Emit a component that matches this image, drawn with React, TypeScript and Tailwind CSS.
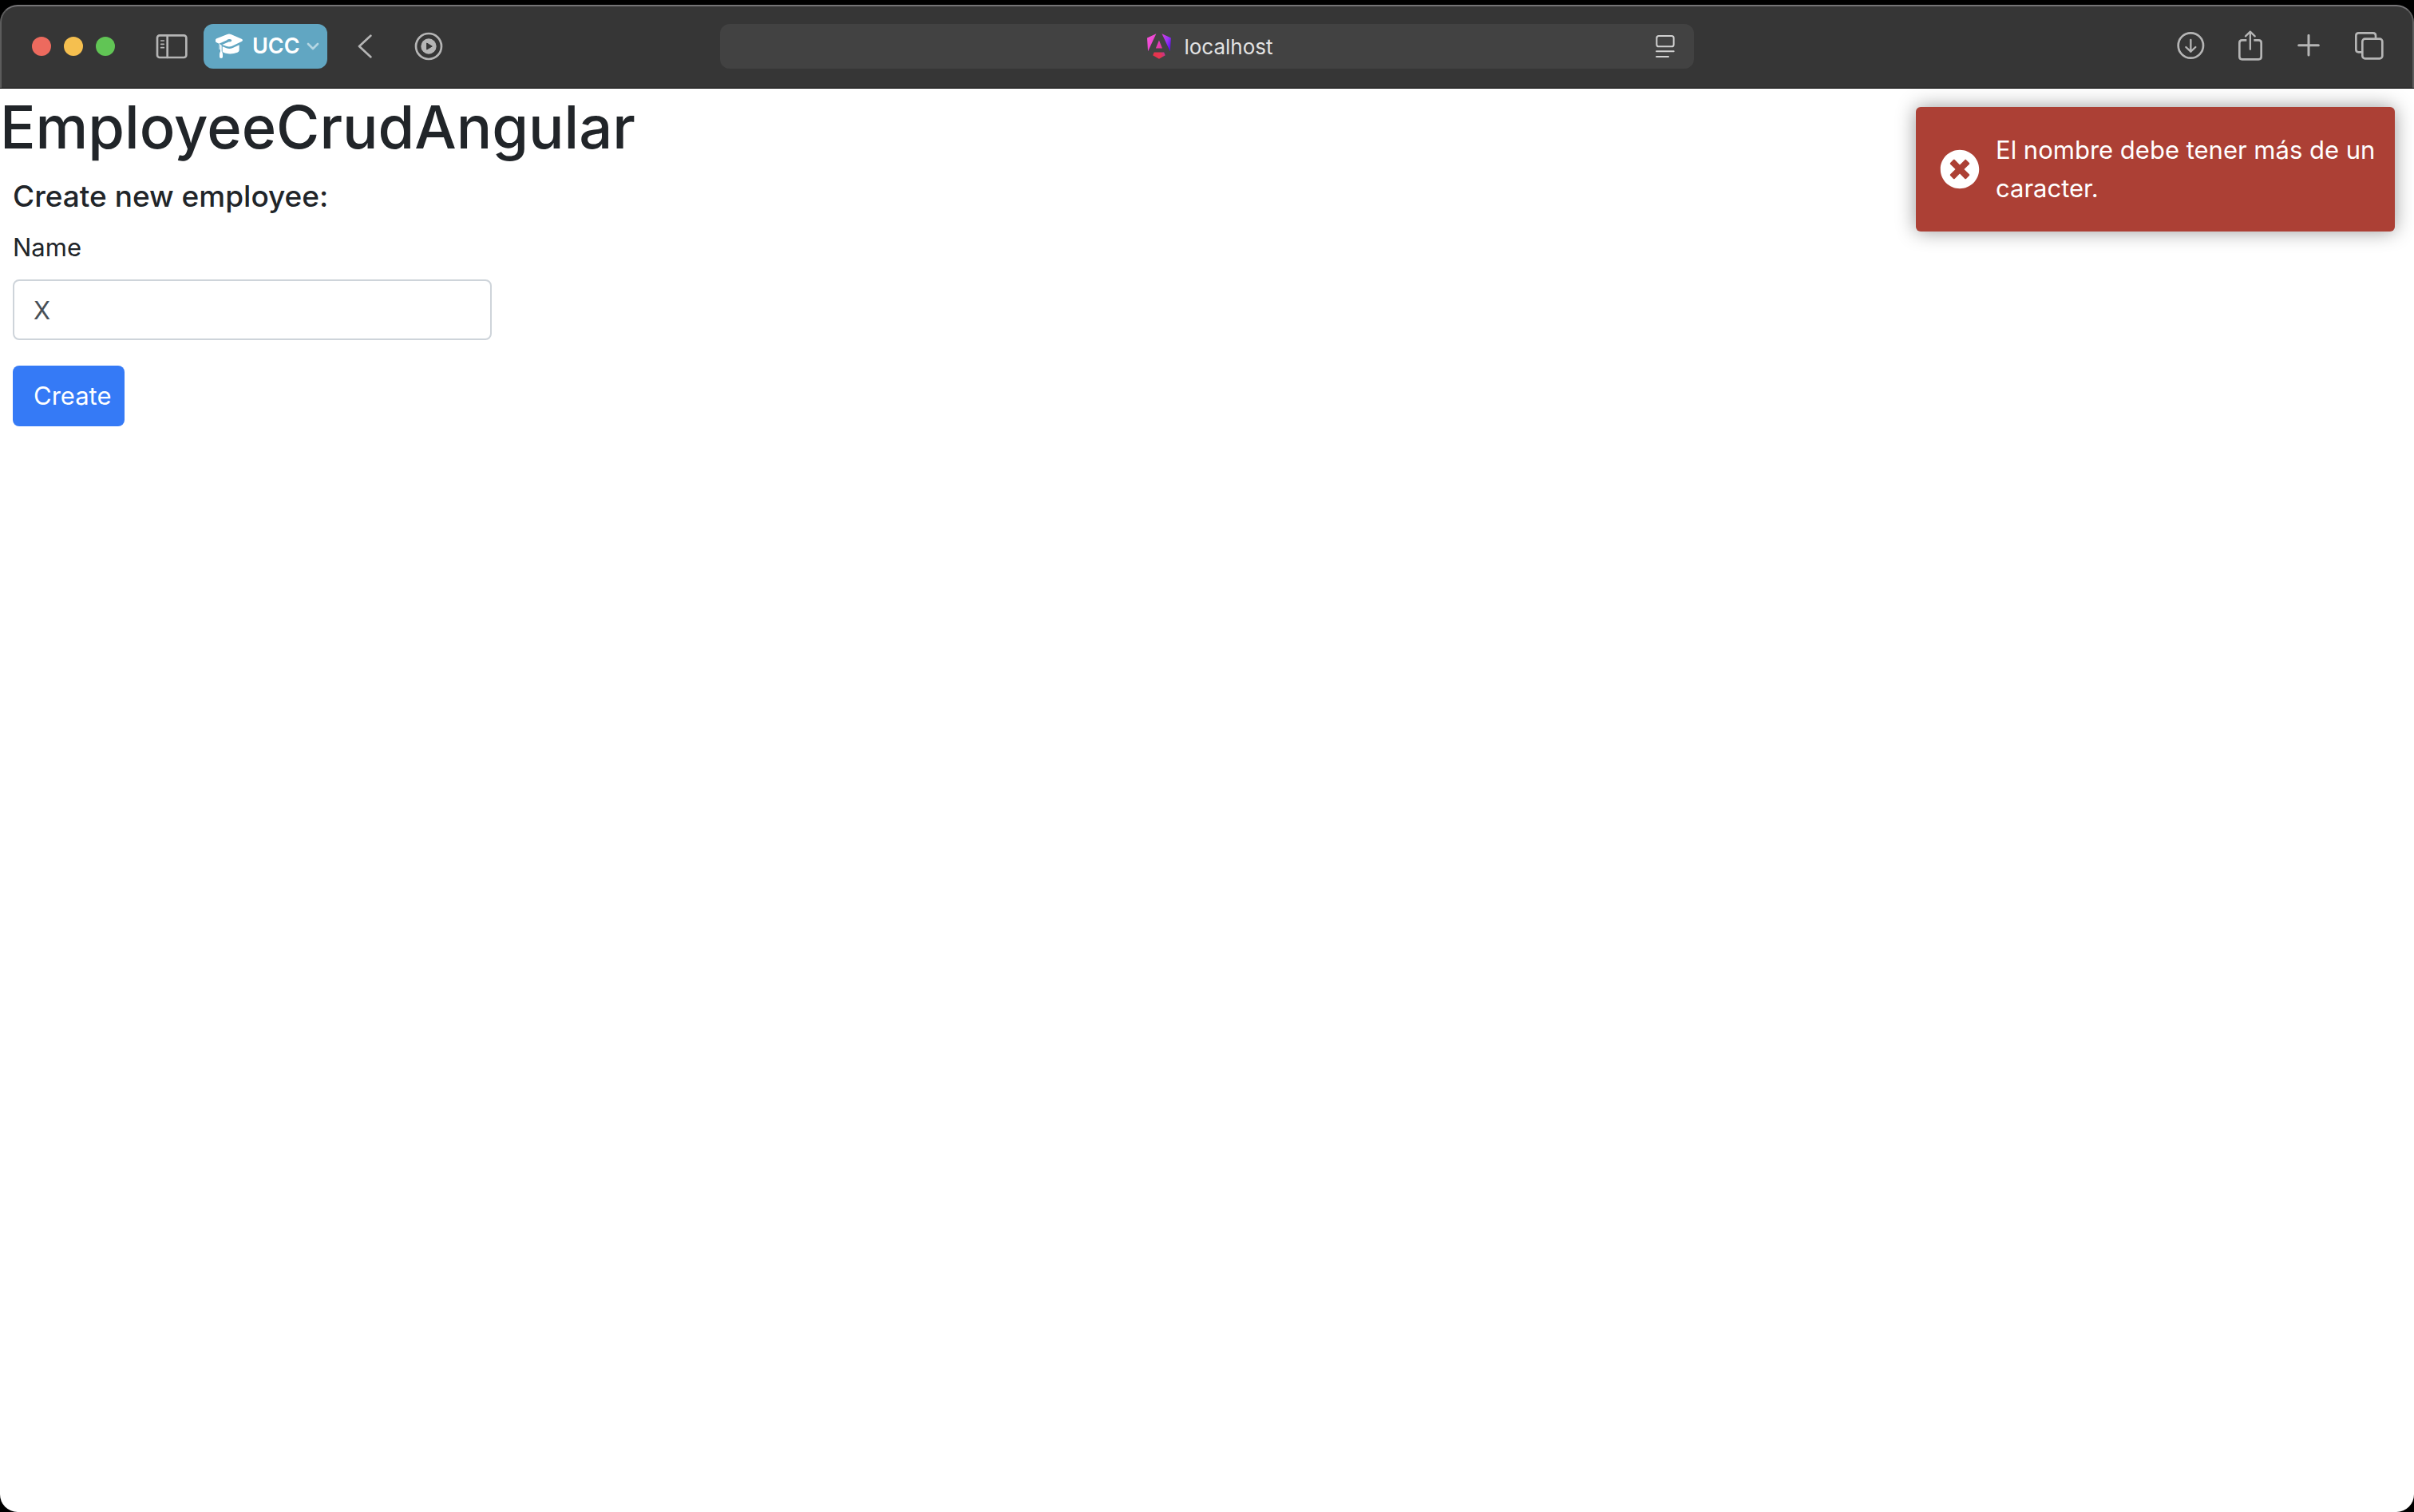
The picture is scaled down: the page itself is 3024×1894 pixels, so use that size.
import { useState, type ReactNode } from "react";
import { FaTimesCircle } from "react-icons/fa";

type IconButtonProps = {
  label: string;
  children: ReactNode;
  className?: string;
};

function IconButton({ label, children, className = "" }: IconButtonProps) {
  return (
    <button type="button" aria-label={label} className={`shrink-0 ${className}`}>
      {children}
    </button>
  );
}

const stroke = {
  fill: "none",
  stroke: "currentColor",
  strokeLinecap: "round" as const,
  strokeLinejoin: "round" as const,
};

function SidebarIcon() {
  return (
    <svg width="40" height="32" viewBox="586 122 120 96" {...stroke} strokeWidth="8">
      <rect x="592" y="129" width="109" height="83" rx="9" />
      <path d="M630 129v83" />
      <path d="M606 149h11M606 162h11M606 175h11" strokeWidth="5" />
    </svg>
  );
}

function GraduationIcon() {
  return (
    <svg width="36" height="34" viewBox="87 128 108 102" fill="currentColor">
      <path d="M90 155q0-3 4-5l40-16q7-3 14 0l40 17q4 2 4 5t-4 5l-36 17q-10 4-20 1l-17-6 26-11q9 1 10-5-1-6-9-5-7 0-9 4l-30 13-9-4q-4-2-4-5Z" />
      <path d="M116 180l15 6q12 4 24-1l24-11v20q0 5-7 8-17 7-35 5-13-1-21-7Z" />
      <path d="M105 171l8 4v23q4 4 4 12v9q0 5-6 5t-6-5v-9q0-8 3-11v-24l-3-1Z" />
      <path d="M105 172v18" stroke="currentColor" strokeWidth="3" strokeLinecap="round" />
    </svg>
  );
}

function PlayIcon() {
  return (
    <svg width="36" height="36" viewBox="0 0 108 108">
      <circle cx="54" cy="54" r="48" fill="none" stroke="currentColor" strokeWidth="8" />
      <circle cx="54" cy="54" r="29" fill="currentColor" />
      <path d="M47 42v24l20-12Z" fill="#363636" stroke="#363636" strokeWidth="3" strokeLinejoin="round" />
    </svg>
  );
}

function AngularLogo() {
  return (
    <svg width="30" height="32" viewBox="0 0 223 236" aria-hidden="true">
      <defs>
        <linearGradient id="angular-cool" x1="22" y1="28" x2="220" y2="120" gradientUnits="userSpaceOnUse">
          <stop stopColor="#f550d8" />
          <stop offset=".35" stopColor="#e83ed0" />
          <stop offset=".75" stopColor="#9a35f5" />
          <stop offset="1" stopColor="#5f0df0" />
        </linearGradient>
        <linearGradient id="angular-core" x1="85" y1="70" x2="130" y2="136" gradientUnits="userSpaceOnUse">
          <stop stopColor="#e83ed0" />
          <stop offset="1" stopColor="#e0399a" />
        </linearGradient>
        <linearGradient id="angular-base" x1="70" y1="215" x2="165" y2="180" gradientUnits="userSpaceOnUse">
          <stop stopColor="#e8334a" />
          <stop offset=".6" stopColor="#e23656" />
          <stop offset="1" stopColor="#c0329c" />
        </linearGradient>
      </defs>
      <path fill="url(#angular-cool)" d="m222.077 39.192-8.019 125.923L137.387 0l84.69 39.192ZM7.937 165.115 0 39.192 84.69 0 7.937 165.115Z" />
      <path fill="url(#angular-base)" d="m168.972 202.017-57.933 33.056-57.934-33.056 11.783-28.556h92.301l11.783 28.556Z" />
      <path fill="url(#angular-core)" d="m111.039 62.675 30.357 73.803H80.681l30.358-73.803Z" />
    </svg>
  );
}

function BrowserBar() {
  return (
    <header className="grid h-[104px] grid-cols-[1fr_minmax(0,1220px)_1fr] items-center rounded-t-[22px] border-x-2 border-t-2 border-x-[#5c5c5c] border-t-[#757476] bg-[#363636] pb-0.5 text-[#b5b5b5]">
      <div className="flex items-center pl-[38px]">
        <div className="flex gap-4">
          <button type="button" aria-label="Close" className="size-6 rounded-full bg-[#ed6a5e]" />
          <button type="button" aria-label="Minimize" className="size-6 rounded-full bg-[#f5bf4f]" />
          <button type="button" aria-label="Zoom" className="size-6 rounded-full bg-[#61c555]" />
        </div>
        <IconButton label="Show sidebar" className="ml-[51px]">
          <SidebarIcon />
        </IconButton>
        <button
          type="button"
          className="ml-5 flex h-14 w-[155px] items-center rounded-xl bg-[#61a6c2] pl-3.5 text-[27px] font-semibold text-white"
        >
          <GraduationIcon />
          <span className="ml-[11px]">UCC</span>
          <svg width="16" height="12" viewBox="0 0 48 36" className="ml-auto mr-2.5 text-[#b4d6e3]" {...stroke} strokeWidth="8">
            <path d="M6 9l18 18L42 9" />
          </svg>
        </button>
        <IconButton label="Back" className="ml-[38px]">
          <svg width="18" height="30" viewBox="0 0 54 90" {...stroke} strokeWidth="8">
            <path d="M49 5L6 45l43 40" />
          </svg>
        </IconButton>
        <IconButton label="Media playing" className="ml-[53px]">
          <PlayIcon />
        </IconButton>
      </div>

      <div className="grid h-14 grid-cols-[1fr_auto_1fr] items-center rounded-xl bg-[#424242]">
        <a href="#" className="col-start-2 flex items-center gap-4 pl-2 text-[26px] text-[#e2e2e2]">
          <AngularLogo />
          localhost
        </a>
        <IconButton label="Reader options" className="mr-6 justify-self-end text-[#d0d0d0]">
          <svg width="24" height="28" viewBox="161 132 72 84" {...stroke} strokeWidth="6">
            <rect x="165" y="135" width="64" height="40" rx="8" />
            <path d="M164 193h65M164 213h45" />
          </svg>
        </IconButton>
      </div>

      <div className="flex items-center justify-end pr-9">
        <IconButton label="Downloads">
          <svg width="36" height="36" viewBox="138 120 108 108" {...stroke} strokeWidth="8">
            <circle cx="190" cy="171" r="47" />
            <path d="M190 150v44M172 177l18 17 18-17" strokeWidth="7" />
          </svg>
        </IconButton>
        <IconButton label="Share" className="ml-10">
          <svg width="32" height="40" viewBox="368 112 96 120" {...stroke} strokeWidth="8">
            <path d="M402 149h-17q-10 0-10 10v52q0 10 10 10h62q10 0 10-10v-52q0-10-10-10h-18" strokeLinecap="butt" />
            <path d="M415.500 183v-66M398 134l17.500-17 17.500 17" strokeWidth="7" />
          </svg>
        </IconButton>
        <IconButton label="New tab" className="ml-[43px]">
          <svg width="28" height="30" viewBox="593 128 84 90" {...stroke} strokeWidth="9">
            <path d="M635 132v74M598 169h74" />
          </svg>
        </IconButton>
        <IconButton label="Show tab overview" className="ml-11">
          <svg width="36" height="36" viewBox="809 119 108 108" {...stroke} strokeWidth="8">
            <rect x="837" y="145" width="75" height="74" rx="10" />
            <path d="M834 195h-11q-10 0-10-10v-52q0-10 10-10h54q10 0 10 10v9" />
          </svg>
        </IconButton>
      </div>
    </header>
  );
}

function ErrorToast({ message }: { message: string }) {
  return (
    <div
      role="alert"
      className="absolute right-6 top-[23px] flex w-[600px] items-center gap-5 rounded-md bg-[#ac4035] py-[30px] pl-[30px] pr-4 text-[31px] leading-[48px] text-white shadow-[0_0_24px_#999999]"
    >
      <FaTimesCircle size={50} className="shrink-0" aria-hidden="true" />
      <p>{message}</p>
    </div>
  );
}

export default function App() {
  const [name, setName] = useState("X");

  return (
    <div className="flex min-h-screen flex-col bg-black pt-1.5 font-['Inter',sans-serif]">
      <BrowserBar />
      <main className="relative grow overflow-hidden rounded-b-[22px] border-t border-black bg-white text-[#212529]">
        <h1 className="pt-0.5 text-[74px] font-medium leading-[93px]">EmployeeCrudAngular</h1>
        <form className="flex flex-col items-start px-4 pt-4" onSubmit={(e) => e.preventDefault()}>
          <h2 className="text-[37px] font-medium leading-[48px]">Create new employee:</h2>
          <label htmlFor="name" className="mt-4 text-[31px] leading-[48px]">
            Name
          </label>
          <input
            id="name"
            type="text"
            value={name}
            onChange={(e) => setName(e.target.value)}
            className="mt-4 h-[76px] w-[600px] max-w-full rounded-lg border-2 border-[#ced4da] bg-white px-6 text-[31px] text-[#495057]"
          />
          <button
            type="submit"
            className="mt-8 h-[76px] w-[140px] rounded-lg bg-[#357af6] pl-[26px] text-left text-[31px] text-white"
          >
            Create
          </button>
        </form>
        <ErrorToast message="El nombre debe tener más de un caracter." />
      </main>
    </div>
  );
}
